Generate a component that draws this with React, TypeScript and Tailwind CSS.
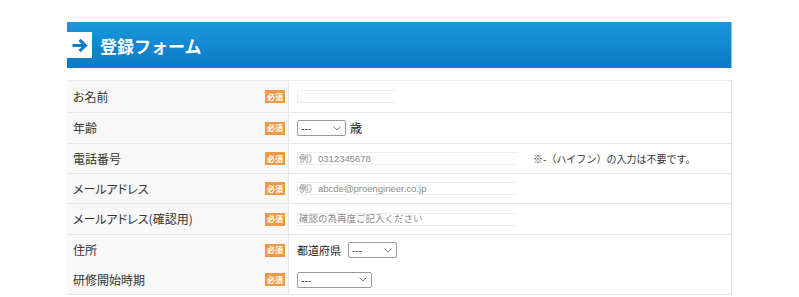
import React from "react";

const font = { fontFamily: '"Noto Sans CJK JP", "Noto Sans", sans-serif' };
const latinFont = { fontFamily: '"Liberation Sans", "Noto Sans CJK JP", sans-serif' };
const palt = { fontFeatureSettings: '"palt"' };

function Badge() {
  return (
    <span className="inline-flex items-center justify-center w-[20px] h-[13px] bg-[#ee9a45] text-white text-[8px] font-bold leading-none">
      必須
    </span>
  );
}

function Chevron() {
  return (
    <svg width="8" height="5" viewBox="0 0 8 5" className="text-[#777]">
      <path d="M0.5 0.5 L4 4 L7.5 0.5" fill="none" stroke="currentColor" strokeWidth="0.9" />
    </svg>
  );
}

function Select({ w }: { w: string }) {
  return (
    <div className={`${w} h-[16px] border border-[#9a9a9a] rounded-[2px] bg-white flex items-center justify-between pl-[3px] pr-[4px]`}>
      <span className="text-[10px] leading-none text-[#222] tracking-tight">---</span>
      <Chevron />
    </div>
  );
}

function TextInput({ w, placeholder }: { w: string; placeholder?: string }) {
  return (
    <div className={`${w} h-[13px] border-y border-l border-[#ececec] bg-white flex items-center pl-[1px]`}>
      {placeholder && (
        <span className="text-[9.5px] leading-none text-[#8a8a8a] whitespace-nowrap" style={latinFont}>
          {placeholder}
        </span>
      )}
    </div>
  );
}

function Row({ label, children, h, border = true }: { label: string; children?: React.ReactNode; h: string; border?: boolean }) {
  return (
    <div className={`flex ${h} ${border ? "border-b border-[#e6e6e6]" : ""}`}>
      <div className="w-[222px] shrink-0 bg-[#f8f8f8] border-r border-[#e6e6e6] flex items-center justify-between pl-[6px] pr-[3px]">
        <span className="text-[12px] text-[#333] whitespace-nowrap" style={palt}>{label}</span>
        <Badge />
      </div>
      <div className="flex-1 flex items-center pl-[8px]">{children}</div>
    </div>
  );
}

export default function App() {
  return (
    <div className="w-[799px] h-[297px] bg-white overflow-hidden" style={font}>
      <div className="ml-[67px] w-[665px] pt-[22px]">
        <div className="h-[46px] bg-gradient-to-b from-[#1a98de] to-[#0b79c3] border-r border-[#7cc8ee] flex items-center">
          <div className="w-[25px] h-[26px] bg-white flex items-center justify-center">
            <svg width="16" height="15" viewBox="0 0 16 15">
              <path d="M0.5 7.5 H13 M7.5 1.8 L13.5 7.5 L7.5 13.2" fill="none" stroke="#0d7cc4" strokeWidth="3" strokeLinecap="butt" />
            </svg>
          </div>
          <span className="ml-[8px] text-white text-[17px] font-bold leading-none">登録フォーム</span>
        </div>
        <div className="mt-[12px] border-t border-[#ededed] border-r border-r-[#e6e6e6]">
          <Row label="お名前" h="h-[32px]">
            <TextInput w="w-[98px]" />
          </Row>
          <Row label="年齢" h="h-[31px]">
            <Select w="w-[49px]" />
            <span className="ml-[4px] text-[12px] text-[#222]">歳</span>
          </Row>
          <Row label="電話番号" h="h-[30px]">
            <TextInput w="w-[221px]" placeholder="例）0312345678" />
            <span className="ml-[15px] text-[10px] text-[#333] whitespace-nowrap">※-（ハイフン）の入力は不要です。</span>
          </Row>
          <Row label="メールアドレス" h="h-[30px]">
            <TextInput w="w-[221px]" placeholder="例）abcde@proengineer.co.jp" />
          </Row>
          <Row label="メールアドレス(確認用)" h="h-[31px]">
            <TextInput w="w-[221px]" placeholder="確認の為再度ご記入ください" />
          </Row>
          <Row label="住所" h="h-[30px]" border={false}>
            <span className="text-[11px] text-[#222]">都道府県</span>
            <div className="ml-[7px]">
              <Select w="w-[49px]" />
            </div>
          </Row>
          <Row label="研修開始時期" h="h-[30px]">
            <Select w="w-[75px]" />
          </Row>
        </div>
      </div>
    </div>
  );
}
